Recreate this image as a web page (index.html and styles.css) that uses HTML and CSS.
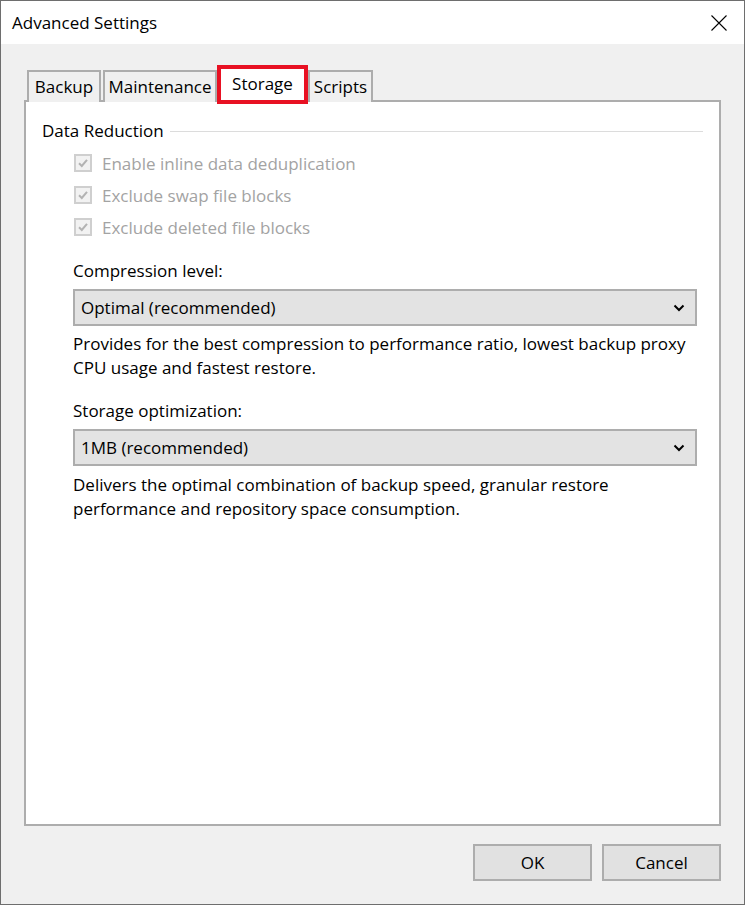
FILE: index.html
```html
<!DOCTYPE html>
<html>
<head>
<meta charset="utf-8">
<link rel="stylesheet" href="styles.css">
</head>
<body>
<div class="window">
  <div class="titlebar">
    <span class="title">Advanced Settings</span>
    <svg class="close" width="16" height="16" viewBox="0 0 16 16"><path d="M0.5 0.5 L15.5 15.5 M15.5 0.5 L0.5 15.5" stroke="#000" stroke-width="1.1" fill="none"/></svg>
  </div>
  <div class="client">
    <div class="tabs">
      <div class="tab tab-backup">Backup</div>
      <div class="tab tab-maint">Maintenance</div>
      <div class="tab tab-storage selected">Storage</div>
      <div class="tab tab-scripts">Scripts</div>
    </div>
    <div class="panel">
      <div class="group-head"><span>Data Reduction</span><div class="rule"></div></div>
      <div class="checks">
        <div class="check"><span class="box"><svg width="12" height="12" viewBox="0 0 12 12"><path d="M2 6.2 L4.8 9 L10 2.8" stroke="#b3b3b3" stroke-width="2" fill="none"/></svg></span>Enable inline data deduplication</div>
        <div class="check"><span class="box"><svg width="12" height="12" viewBox="0 0 12 12"><path d="M2 6.2 L4.8 9 L10 2.8" stroke="#b3b3b3" stroke-width="2" fill="none"/></svg></span>Exclude swap file blocks</div>
        <div class="check"><span class="box"><svg width="12" height="12" viewBox="0 0 12 12"><path d="M2 6.2 L4.8 9 L10 2.8" stroke="#b3b3b3" stroke-width="2" fill="none"/></svg></span>Exclude deleted file blocks</div>
      </div>
      <div class="field field-first">
        <div class="label">Compression level:</div>
        <div class="select"><span>Optimal (recommended)</span><svg width="12" height="8" viewBox="0 0 12 8"><path d="M1.5 1.5 L6 6 L10.5 1.5" stroke="#000" stroke-width="2" fill="none"/></svg></div>
        <p class="desc">Provides for the best compression to performance ratio, lowest backup proxy<br>CPU usage and fastest restore.</p>
      </div>
      <div class="field field-second">
        <div class="label">Storage optimization:</div>
        <div class="select"><span>1MB (recommended)</span><svg width="12" height="8" viewBox="0 0 12 8"><path d="M1.5 1.5 L6 6 L10.5 1.5" stroke="#000" stroke-width="2" fill="none"/></svg></div>
        <p class="desc">Delivers the optimal combination of backup speed, granular restore<br>performance and repository space consumption.</p>
      </div>
    </div>
    <div class="buttons">
      <div class="btn">OK</div>
      <div class="btn">Cancel</div>
    </div>
  </div>
</div>
</body>
</html>
```

FILE: styles.css
```css
html, body {
  margin: 0;
  padding: 0;
  background: #ffffff;
}
body {
  font-family: "Open Sans", "Noto Sans", sans-serif;
  font-size: 17px;
  color: #000;
}
.window {
  width: 745px;
  height: 905px;
  box-sizing: border-box;
  border: 1px solid #6e6e6e;
  display: flex;
  flex-direction: column;
  background: #f0f0f0;
}
.titlebar {
  height: 43px;
  flex: none;
  background: #fff;
  display: flex;
  align-items: center;
  justify-content: space-between;
  padding: 0 17px 0 11px;
}
.title {
  font-size: 17px;
  line-height: 20px;
  margin-top: 1px;
}
.close {
  display: block;
}
.client {
  flex: 1;
  display: flex;
  flex-direction: column;
  padding: 0 23px 0 23px;
}
.tabs {
  display: flex;
  align-items: flex-end;
  height: 58px;
  padding-left: 3px;
  position: relative;
  z-index: 2;
  margin-bottom: -2px;
}
.tab {
  box-sizing: border-box;
  height: 32px;
  border: 2px solid #adadad;
  border-bottom: none;
  background: #f0f0f0;
  text-align: center;
  line-height: 29px;
  font-size: 17px;
}
.tab-backup { width: 74px; margin-right: 2px; }
.tab-maint { width: 114px; }
.tab-storage { width: 91px; }
.tab-scripts { width: 65px; }
.tab.selected {
  height: 39px;
  border: 4px solid #e81123;
  background: #fff;
  line-height: 29px;
  margin-bottom: -2px;
}
.panel {
  height: 726px;
  box-sizing: border-box;
  background: #fff;
  border: 2px solid #adadad;
  padding: 17px 16px 0 16px;
  flex: none;
}
.group-head {
  display: flex;
  align-items: center;
  height: 24px;
  line-height: 24px;
}
.group-head .rule {
  flex: 1;
  height: 1px;
  background: #dcdcdc;
  margin-left: 6px;
  margin-top: 1px;
}
.checks {
  padding-left: 32px;
  padding-top: 4px;
}
.check {
  height: 32px;
  display: flex;
  align-items: center;
  color: #a3a3a3;
}
.box {
  box-sizing: border-box;
  width: 18px;
  height: 18px;
  border: 2px solid #cfcfcf;
  background: #f2f2f2;
  margin-right: 10px;
  display: flex;
  align-items: center;
  justify-content: center;
}
.box svg { display: block; }
.field {
  padding-left: 31px;
  padding-right: 6px;
}
.field-first { margin-top: 16px; }
.field-second { margin-top: 19px; }
.label {
  line-height: 24px;
}
.select {
  margin-top: 6px;
  box-sizing: border-box;
  height: 37px;
  background: #e3e3e3;
  border: 2px solid #adadad;
  display: flex;
  align-items: center;
  justify-content: space-between;
  padding: 0 10px 0 6px;
}
.select svg { display: block; }
.desc {
  margin: 6px 0 0 0;
  line-height: 24px;
}
.field-second .desc { margin-top: 7px; }
.buttons {
  display: flex;
  justify-content: flex-end;
  gap: 10px;
  margin-top: 18px;
}
.btn {
  box-sizing: border-box;
  width: 119px;
  height: 37px;
  background: #e1e1e1;
  border: 2px solid #adadad;
  text-align: center;
  line-height: 33px;
}
```
